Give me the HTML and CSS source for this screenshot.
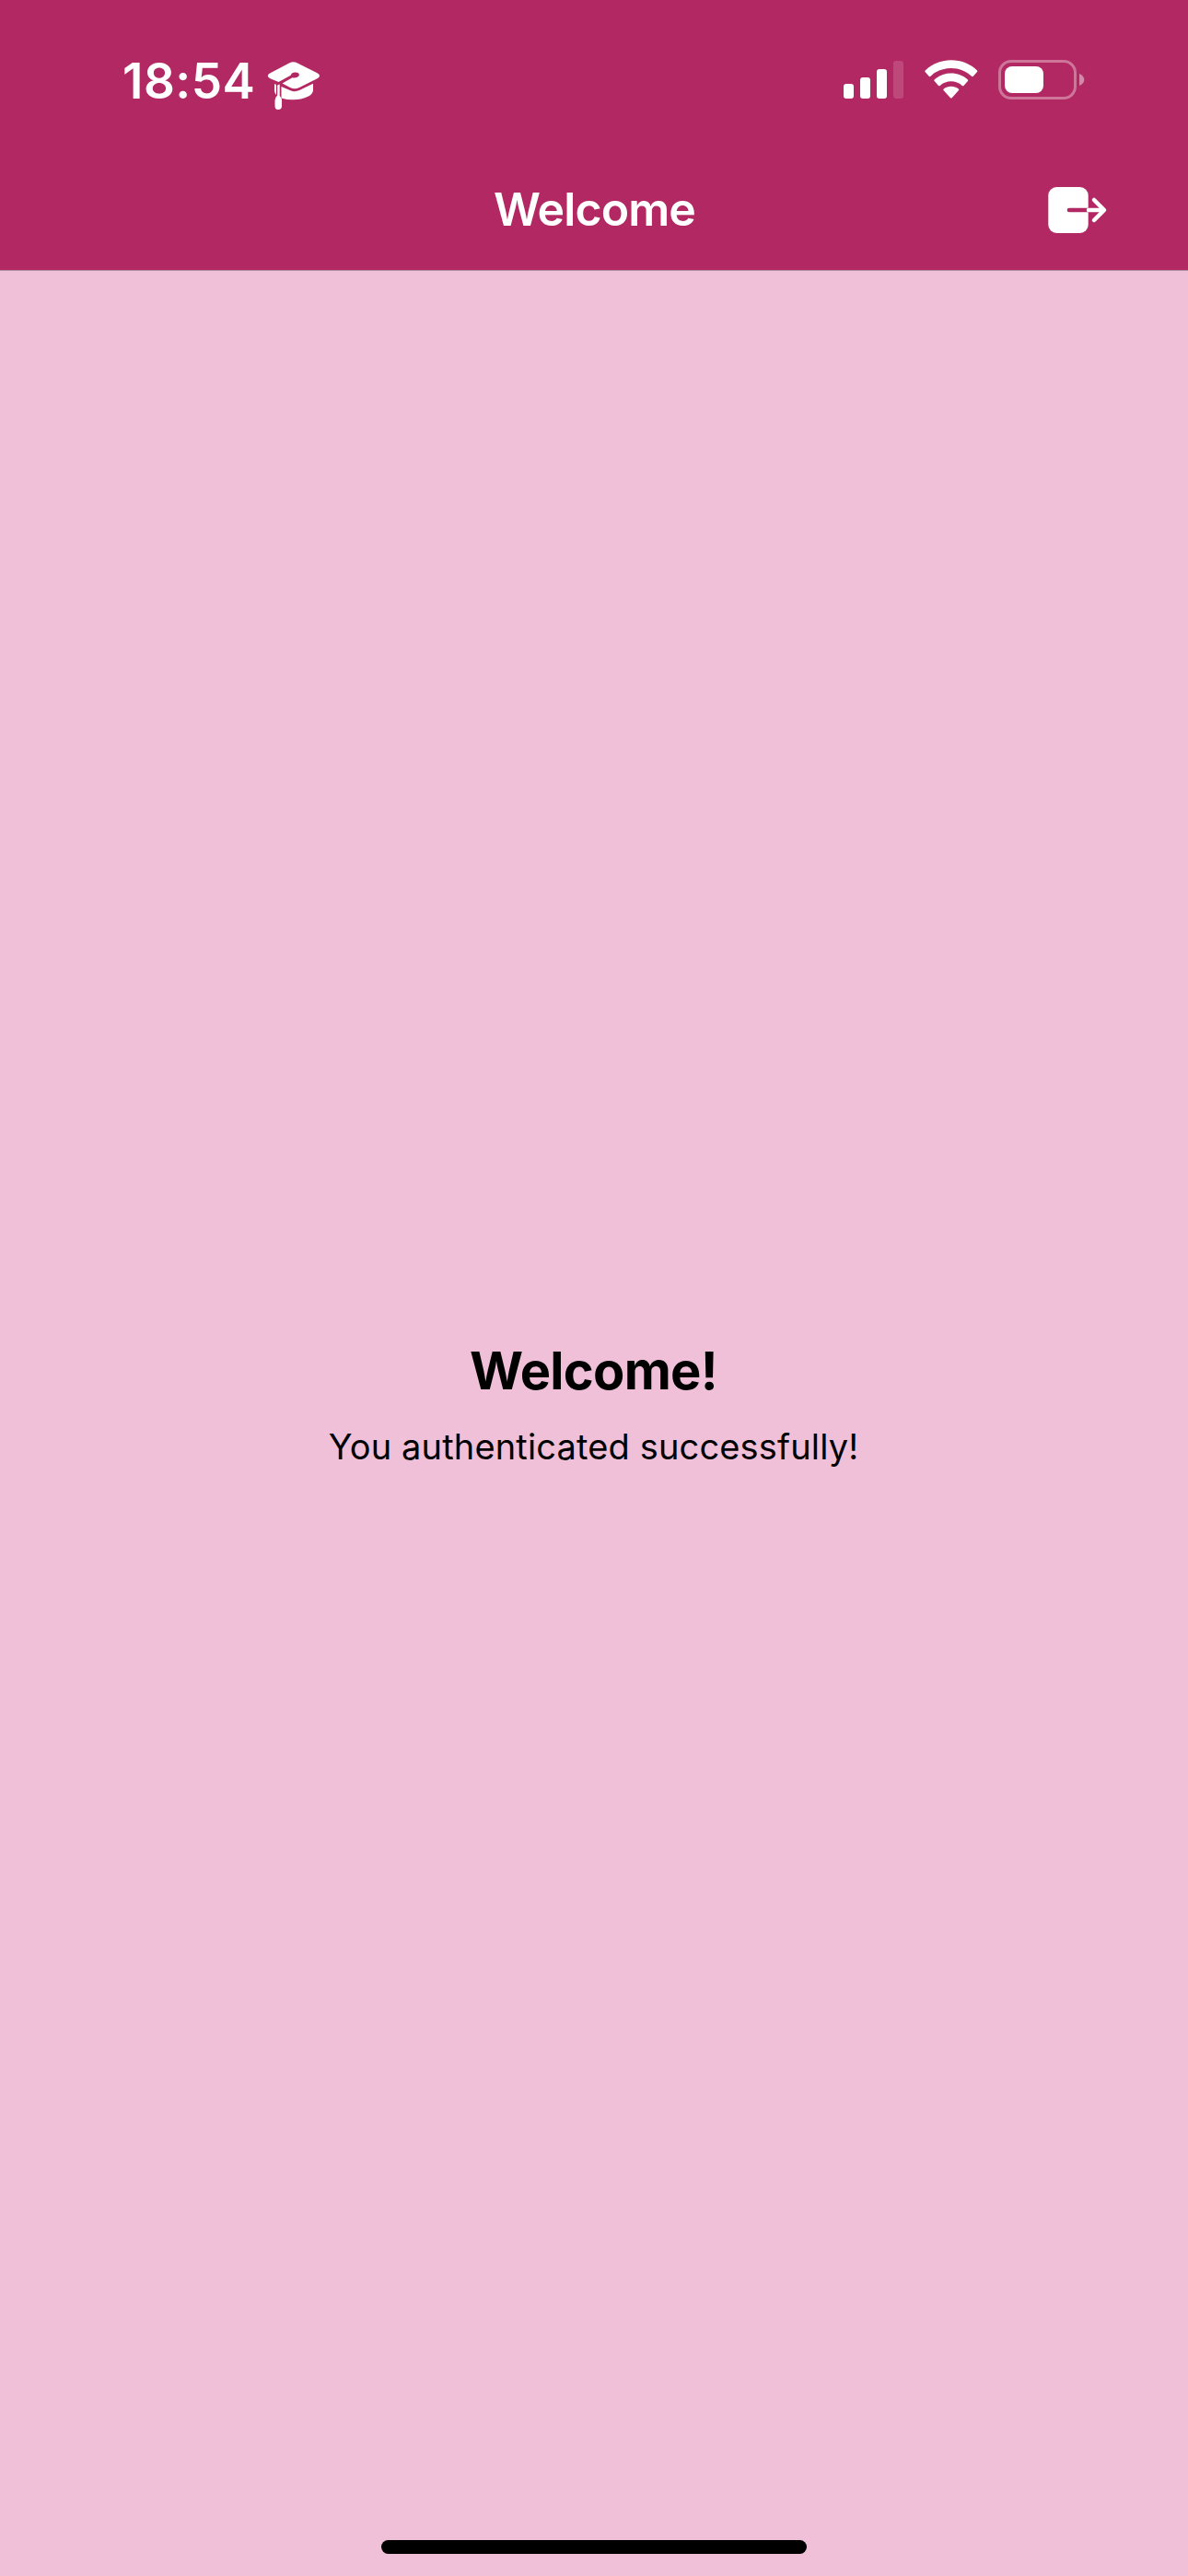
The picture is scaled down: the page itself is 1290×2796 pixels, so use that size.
FILE: index.html
```html
<!DOCTYPE html>
<html lang="en">
<head>
<meta charset="utf-8">
<title>Welcome</title>
<link rel="stylesheet" href="styles.css">
</head>
<body>
<div class="screen">
  <header class="header">
    <div class="status-bar">
      <div class="status-left">
        <span class="clock">18:54</span>
        <svg class="focus-icon" viewBox="0 0 60 56" fill="#fff">
          <path d="M24 1.500Q28.500 -0.800 33 1.500L54 12Q60 15 54 18.500L35 28Q30 30.500 25 28L16.500 23.500L27.500 17.200Q32 18 34.300 15.800Q36 12.500 32.500 11.700Q27 10.800 25.700 14.800L12.500 22L4 18.500Q-2.500 15 4 12Z"/>
          <path d="M15.500 27L25.500 31.200Q30 33.200 35 31L50 23.800V31Q49.500 35 45 37.500Q31 44 15.500 39.500Z"/>
          <path d="M8 24L10 25V36Q8 34 8 31ZM11.200 25.500L13.700 24.500V37Q16 39.500 16 42V48Q16 52 12 52Q8.500 52 8.500 48V42Q8.500 39 11.200 36.500Z"/>
        </svg>
      </div>
      <div class="status-right">
        <svg class="signal" viewBox="0 0 65 41" fill="#fff">
          <rect x="0" y="25" width="11" height="16" rx="3"/>
          <rect x="18" y="18" width="11" height="23" rx="3"/>
          <rect x="36" y="9" width="11" height="32" rx="3"/>
          <rect x="54" y="0" width="11" height="41" rx="3" fill-opacity=".15"/>
        </svg>
        <svg class="wifi" viewBox="0 0 58 42" fill="#fff">
          <path d="M0.500 13Q0 12.300 .7 11.500C16 -3.500 42 -3.500 57 11.500Q57.700 12.300 57 13L52.800 17.800Q52 18.600 51 17.700C39 6 18.500 6 6.500 17.700Q5.500 18.600 4.700 17.800Z"/>
          <path d="M10.600 23Q9.900 22.200 10.800 21.300C20.500 12.300 37 12.300 46.700 21.300Q47.600 22.200 46.900 23L42.500 27.900Q41.700 28.700 40.700 27.900C34 21.800 23.500 21.800 16.800 27.900Q15.800 28.700 15 27.900Z"/>
          <path d="M20.500 33Q19.900 32.300 20.700 31.600C25.300 27.800 32.200 27.800 36.800 31.600Q37.600 32.300 37 33L29.600 41.200Q28.800 42 28 41.200Z"/>
        </svg>
        <svg class="battery" viewBox="0 0 94 43" fill="#fff">
          <rect x="1.500" y="1.500" width="82" height="40" rx="12.500" fill="none" stroke="#fff" stroke-width="3" stroke-opacity=".36"/>
          <rect x="7" y="7" width="42" height="29" rx="8"/>
          <path d="M88 15Q93.300 17.500 93.300 21.500Q93.300 25.500 88 28Z" fill-opacity=".45"/>
        </svg>
      </div>
    </div>
    <nav class="nav-bar">
      <span class="nav-title">Welcome</span>
      <button class="logout" aria-label="Log out">
        <svg viewBox="0 0 65 50">
          <rect x="0.300" y="0" width="43.400" height="50" rx="9" fill="#fff"/>
          <path d="M23 25H44" stroke="#b22862" stroke-width="4.600" stroke-linecap="round"/>
          <path d="M44 25H60M50 14L61 25L50 36" fill="none" stroke="#fff" stroke-width="4.500" stroke-linecap="round" stroke-linejoin="round"/>
        </svg>
      </button>
    </nav>
  </header>
  <main class="content">
    <h1 class="heading">Welcome!</h1>
    <p class="message">You authenticated successfully!</p>
  </main>
  <footer class="footer"><div class="home-indicator"></div></footer>
</div>
</body>
</html>
```
FILE: styles.css
```css
body {
  margin: 0;
  font-family: Inter, "Liberation Sans", sans-serif;
}

.screen {
  display: flex;
  flex-direction: column;
  width: 1290px;
  height: 2796px;
  background: #f0c0d9;
}

.header {
  box-sizing: border-box;
  height: 294px;
  background: #b22862;
  border-bottom: 1px solid #b18a9f;
  color: #fff;
}

.status-bar {
  display: flex;
  justify-content: space-between;
  height: 162px;
  padding: 0 112px 0 133px;
}

.status-left {
  display: flex;
  align-items: flex-start;
}

.clock {
  width: 157px;
  padding-top: 56px;
  font-size: 53px;
  line-height: 64px;
  font-weight: 600;
  letter-spacing: 0.5px;
  white-space: nowrap;
}

.focus-icon {
  width: 60px;
  height: 56px;
  margin-top: 67px;
}

.status-right {
  display: flex;
  align-items: flex-start;
}

.signal {
  width: 65px;
  height: 41px;
  margin: 66px 23px 0 0;
}

.wifi {
  width: 58px;
  height: 42px;
  margin: 65px 22px 0 0;
}

.battery {
  width: 94px;
  height: 43px;
  margin-top: 65px;
}

.nav-bar {
  display: grid;
  grid-template-columns: 1fr auto 1fr;
  align-items: center;
  height: 132px;
  padding: 0 87px;
}

.nav-title {
  grid-column: 2;
  margin: -3px 0 0 1px;
  font-size: 50px;
  line-height: 60px;
  font-weight: 600;
  letter-spacing: -0.9px;
}

.logout {
  justify-self: end;
  width: 65px;
  height: 50px;
  padding: 0;
  border: 0;
  background: none;
}

.logout svg {
  display: block;
  width: 65px;
  height: 50px;
}

.content {
  flex: 1;
  display: flex;
  flex-direction: column;
  align-items: center;
  justify-content: center;
  padding-bottom: 2px;
}

.heading {
  margin: 0 1px 23px 0;
  font-size: 56px;
  line-height: 68px;
  font-weight: 700;
  letter-spacing: -0.7px;
}

.message {
  margin: 0 1px 0 0;
  font-size: 38px;
  line-height: 50px;
  letter-spacing: 0.15px;
}

.footer {
  display: flex;
  justify-content: center;
  height: 39px;
}

.home-indicator {
  width: 462px;
  height: 15px;
  border-radius: 8px;
  background: #000;
}
```
